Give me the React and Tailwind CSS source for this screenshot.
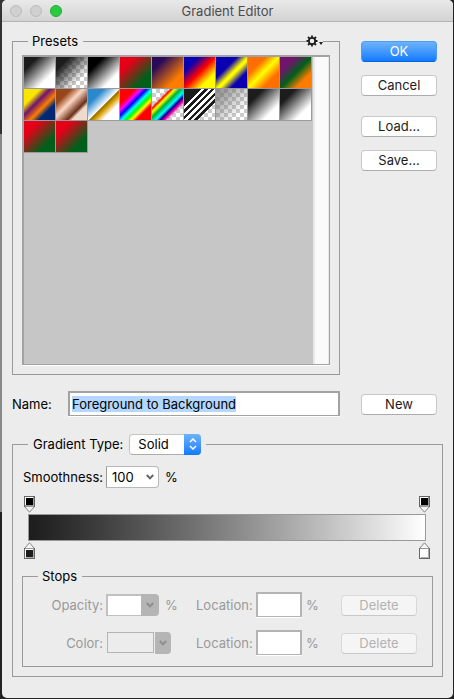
import { useEffect, useRef } from "react";

const presets = [
  { name: "Foreground to Background", fill: "bg-[linear-gradient(135deg,#1c1c1c_22%,#fff_72%)]" },
  {
    name: "Foreground to Transparent",
    fill: "bg-[linear-gradient(135deg,#1c1c1c_22%,transparent_75%),repeating-conic-gradient(#fff_0_25%,#ccc_0_50%)] bg-[length:auto,8px_8px]",
  },
  { name: "Black, White", fill: "bg-[linear-gradient(135deg,#000_25%,#fff_75%)]" },
  { name: "Red, Green", fill: "bg-[linear-gradient(135deg,#e60018_25%,#00601b_75%)]" },
  { name: "Violet, Orange", fill: "bg-[linear-gradient(135deg,#290a59_22%,#ff7c00_75%)]" },
  { name: "Blue, Red, Yellow", fill: "bg-[linear-gradient(135deg,#0a00b2_24%,#ff0000_50%,#fffc00_76%)]" },
  { name: "Blue, Yellow, Blue", fill: "bg-[linear-gradient(135deg,#0a00b2_34%,#fffc00_52%,#fffc00_56%,#0a00b2_74%)]" },
  { name: "Orange, Yellow, Orange", fill: "bg-[linear-gradient(135deg,#ff6e00_28%,#ffff00_50%,#ff6e00_74%)]" },
  { name: "Violet, Green, Orange", fill: "bg-[linear-gradient(135deg,#6f156c_25%,#00601b_51%,#fd7c00_76%)]" },
  { name: "Yellow, Violet, Orange, Blue", fill: "bg-[linear-gradient(135deg,#f9e600_26%,#6f156c_42%,#fd7c00_60%,#002874_74%)]" },
  { name: "Copper", fill: "bg-[linear-gradient(135deg,#97461a_24%,#fbd8c5_44%,#6c2e16_68%,#efdbcd_76%)]" },
  { name: "Chrome", fill: "bg-[linear-gradient(135deg,#2989cc_25%,#fff_51%,#906a00_52%,#d99f00_60%,#fff_74%)]" },
  {
    name: "Spectrum",
    fill: "bg-[linear-gradient(135deg,#f00_24%,#f0f_34%,#00f_43%,#0ff_52%,#0f0_60%,#ff0_68%,#f00_76%)]",
  },
  {
    name: "Transparent Rainbow",
    fill: "bg-[linear-gradient(135deg,transparent_27%,#f00_31%,#ff0_37%,#00b030_46%,#0ff_56%,#000096_63%,#f0a_70%,transparent_76%),repeating-conic-gradient(#ccc_0_25%,#fff_0_50%)] bg-[length:auto,8px_8px]",
  },
  {
    name: "Transparent Stripes",
    fill: "bg-[linear-gradient(135deg,#1c1c1c_28%,#fff_28%_33%,#1c1c1c_33%_39%,#fff_39%_44%,#1c1c1c_44%_50%,#fff_50%_55%,#1c1c1c_55%_60%,#eee_60%_65%,#1c1c1c_65%_71%,transparent_71%),repeating-conic-gradient(#ccc_0_25%,#fff_0_50%)] bg-[length:auto,8px_8px]",
  },
  {
    name: "Neutral Density",
    fill: "bg-[linear-gradient(135deg,#707070b0_15%,#80808000_78%),repeating-conic-gradient(#fff_0_25%,#ccc_0_50%)] bg-[length:auto,8px_8px]",
  },
  { name: "Custom 1", fill: "bg-[linear-gradient(135deg,#1c1c1c_25%,#fff_75%)]" },
  { name: "Custom 2", fill: "bg-[linear-gradient(135deg,#1c1c1c_25%,#fff_75%)]" },
  { name: "Custom 3", fill: "bg-[linear-gradient(135deg,#e60018_25%,#00601b_75%)]" },
  { name: "Custom 4", fill: "bg-[linear-gradient(135deg,#e60018_25%,#00601b_75%)]" },
];

function Button({ children, primary }) {
  return (
    <button
      className={
        primary
          ? "h-[21px] w-[76px] rounded-[4px] border border-[#4a9df8] border-b-[#0a62dc] bg-linear-to-b from-[#6bb3fa] to-[#0a7aff] leading-[19px] text-white"
          : "h-[21px] w-[76px] rounded-[4px] border border-[#c8c8c8] border-b-[#acacac] bg-white leading-[19px] text-[#1c1c1c] disabled:border-[#d8d8d8] disabled:border-b-[#c8c8c8] disabled:bg-[#f5f5f5] disabled:text-[#b2b2b2]"
      }
      disabled={children === "Delete"}
    >
      {children}
    </button>
  );
}

function Chevron() {
  return (
    <svg width="8" height="6" viewBox="0 0 8 6" fill="none" stroke="currentColor" strokeWidth="2">
      <path d="M0.8 1 L4 4.4 L7.2 1" />
    </svg>
  );
}

function Gear() {
  return (
    <svg width="12" height="12" viewBox="0 0 12 12" fill="none" stroke="#1c1c1c">
      <circle cx="6" cy="6" r="3.2" strokeWidth="1.8" />
      <path
        strokeWidth="1.8"
        d="M6 0.5V2.4M6 9.6V11.5M0.5 6H2.4M9.6 6H11.5M2 2L3.4 3.4M8.6 8.6L10 10M10 2L8.6 3.4M3.4 8.6L2 10"
      />
    </svg>
  );
}

// opacity stops point down at the bar, colour stops point up
function Stop({ color, up }) {
  return (
    <svg width="11" height="17" viewBox="0 0 11 17">
      {up ? (
        <>
          <path d="M0.5 6.5L5.5 0.8L10.5 6.5Z" fill="#f4f4f4" stroke="#777" strokeWidth="0.9" />
          <rect x="0.5" y="6.5" width="10" height="10" fill="#fff" stroke="#666" />
          <path d="M1 6.5H10" stroke="#999" />
          <path d="M9.5 7V15.5H2" stroke="#aaa" fill="none" />
          <rect x="2" y="8" width="7" height="7" fill={color} />
        </>
      ) : (
        <>
          <path d="M0.5 10.5L5.5 16.2L10.5 10.5Z" fill="#f4f4f4" stroke="#777" strokeWidth="0.9" />
          <rect x="0.5" y="0.5" width="10" height="10" fill="#fff" stroke="#666" />
          <path d="M9.5 1V9.5H1" stroke="#999" fill="none" />
          <path d="M1 10.5H10" stroke="#999" />
          <rect x="2" y="2" width="7" height="7" fill={color} />
        </>
      )}
    </svg>
  );
}

function LocationField({ id }) {
  return (
    <>
      <label htmlFor={id} className="w-15">Location:</label>
      <input
        id={id}
        disabled
        className="h-[25px] w-[46px] border-2 border-b border-[#b4b4b4] bg-white px-1 shadow-[0_1px_0_#fff]"
      />
      <span className="ml-1">%</span>
      <div className="mr-[15px] ml-auto flex pt-0.5">
        <Button>Delete</Button>
      </div>
    </>
  );
}

export default function App() {
  const nameRef = useRef(null);

  useEffect(() => {
    nameRef.current.focus();
    nameRef.current.select();
  }, []);

  return (
    <div className="min-h-screen bg-[#222] bg-[linear-gradient(#333_0_134px,#888_134px_512px,#222_512px)] bg-[length:50%_100%] bg-no-repeat pr-px pb-px pl-0.5 font-['Inter','Liberation_Sans',sans-serif] text-[13px] leading-5 text-black">
      <div className="rounded-[5px] bg-[#ececec] pb-[21px]">
        {/* Title bar */}
        <header className="relative flex h-[22px] items-center gap-2 rounded-t-[5px] border-b border-[#b4b4b4] bg-linear-to-b from-[#e9e9e9] to-[#d3d3d3] pl-2">
          <button aria-label="Close" className="size-3 rounded-full border border-[#bcbcbc] bg-[#d0d0d0]" />
          <button aria-label="Minimize" className="size-3 rounded-full border border-[#bcbcbc] bg-[#d0d0d0]" />
          <button aria-label="Zoom" className="size-3 rounded-full border border-[#1fae34] bg-[#28cb41]" />
          <h1 className="pointer-events-none absolute inset-x-0 text-center text-[#4c4c4c]">Gradient Editor</h1>
        </header>

        {/* Presets */}
        <div className="flex gap-[21px] pt-[9px] pr-4 pl-2.5">
          <fieldset className="relative min-w-0 flex-1 border border-[#9a9a9a] px-[9px] pt-1 pb-[9px]">
            <legend className="ml-1.5 pr-[5px] pl-1">Presets</legend>
            <button aria-label="Preset options" className="absolute -top-4 right-4 flex items-end bg-[#ececec]">
              <Gear />
              <svg width="5" height="5" viewBox="0 0 5 5" fill="#1c1c1c">
                <path d="M1 0H5L3 3Z" />
              </svg>
            </button>
            <div className="flex h-[310px] border-t-2 border-r border-b border-l-2 border-[#a2a2a2] bg-[#c6c6c6] shadow-[0_1px_0_#fff]">
              <div className="flex flex-1 flex-wrap content-start">
                {presets.map((preset) => (
                  <button
                    key={preset.name}
                    aria-label={preset.name}
                    className="size-8 border-r border-b border-[#9a9a9a]"
                  >
                    <span className={"block size-full " + preset.fill} />
                  </button>
                ))}
              </div>
              <div className="w-4 border-r border-l-2 border-[#e8e8e8] bg-[#fafafa]" />
            </div>
          </fieldset>
          <div className="flex flex-col pt-2.5">
            <Button primary>OK</Button>
            <div className="mt-[13px] mb-5 flex">
              <Button>Cancel</Button>
            </div>
            <div className="flex flex-col gap-[13px]">
              <Button>Load...</Button>
              <Button>Save...</Button>
            </div>
          </div>
        </div>

        {/* Name */}
        <div className="mt-4 flex items-center pr-4 pl-2.5">
          <label htmlFor="name" className="w-14">Name:</label>
          <input
            id="name"
            ref={nameRef}
            defaultValue="Foreground to Background"
            className="mr-[21px] h-[25px] min-w-0 flex-1 border-2 border-b border-[#a2a2a2] bg-white px-0.5 leading-[17px] shadow-[0_1px_0_#fff] outline-none selection:bg-[#b3d7ff] selection:text-black"
          />
          <div className="flex pt-0.5">
            <Button>New</Button>
          </div>
        </div>

        {/* Gradient */}
        <fieldset className="mx-2.5 mt-[17px] min-w-0 border border-[#9a9a9a] px-[9px] pt-[11px] pb-[9px]">
          <legend className="ml-1.5 flex h-[22px] items-center px-[5px]">
            <label htmlFor="type" className="mr-1.5">Gradient Type:</label>
            <div className="relative">
              <select
                id="type"
                className="block h-[21px] w-18 appearance-none rounded-[4px] border border-[#c4c4c4] border-b-[#acacac] bg-white pl-2 leading-[19px]"
              >
                <option>Solid</option>
              </select>
              <span className="pointer-events-none absolute inset-y-0 right-0 flex w-[17px] items-center justify-center rounded-r-[4px] bg-linear-to-b from-[#6bb3fa] to-[#0a7aff]">
                <svg width="8" height="12" viewBox="0 0 8 12" fill="none" stroke="#fff" strokeWidth="1.5">
                  <path d="M1 4L4 1L7 4M1 8L4 11L7 8" />
                </svg>
              </span>
            </div>
          </legend>

          <div className="flex h-[22px] items-center pl-px">
            <label htmlFor="smoothness" className="w-[83px]">Smoothness:</label>
            <div className="flex h-[22px] w-[53px] rounded-r-[4px] border border-[#b8b8b8] border-l-[#999] bg-white">
              <input id="smoothness" defaultValue="100" className="w-[34px] pl-[5px]" />
              <button aria-label="Smoothness slider" className="flex flex-1 items-center justify-center text-[#666]">
                <Chevron />
              </button>
            </div>
            <span className="ml-1.5">%</span>
          </div>

          <div className="mt-2 mr-[3px] ml-0.5 flex flex-col gap-px">
            <div className="flex justify-between">
              <Stop color="#000" />
              <Stop color="#000" />
            </div>
            <div className="mx-1 h-[27px] border border-[#999] bg-linear-to-r from-[#1c1c1c] to-white" />
            <div className="flex justify-between">
              <Stop color="#1c1c1c" up />
              <Stop color="#fff" up />
            </div>
          </div>

          {/* Stops */}
          <fieldset className="mt-[7px] min-w-0 border border-[#9a9a9a] pt-1.5 pb-[11px]">
            <legend className="ml-[15px] pr-[5px] pl-1">Stops</legend>
            <div className="flex flex-col gap-[13px] text-[#999]">
              <div className="flex h-[25px] items-center">
                <label htmlFor="opacity" className="mr-[3px] w-20 text-right">Opacity:</label>
                <div className="flex w-[90px] items-center">
                  <div className="flex h-[22px] w-[53px]">
                    <input id="opacity" disabled className="w-[35px] border-2 border-r-0 border-b border-[#c0c0c0] bg-white" />
                    <button
                      disabled
                      aria-label="Opacity slider"
                      className="flex flex-1 items-center justify-center rounded-r-[4px] bg-[#b5b5b5] text-[#8e8e8e]"
                    >
                      <Chevron />
                    </button>
                  </div>
                  <span className="ml-1.5">%</span>
                </div>
                <LocationField id="opacity-location" />
              </div>
              <div className="flex h-[25px] items-center">
                <label htmlFor="color" className="mr-[3px] w-20 text-right">Color:</label>
                <div className="flex w-[90px] items-center gap-px pl-px">
                  <button id="color" disabled className="h-[21px] w-[47px] border border-[#b4b4b4]" />
                  <button
                    disabled
                    aria-label="Color source"
                    className="flex h-[22px] w-4 items-center justify-center rounded-r-[4px] bg-[#b5b5b5] text-[#8e8e8e]"
                  >
                    <Chevron />
                  </button>
                </div>
                <LocationField id="color-location" />
              </div>
            </div>
          </fieldset>
        </fieldset>
      </div>
    </div>
  );
}
